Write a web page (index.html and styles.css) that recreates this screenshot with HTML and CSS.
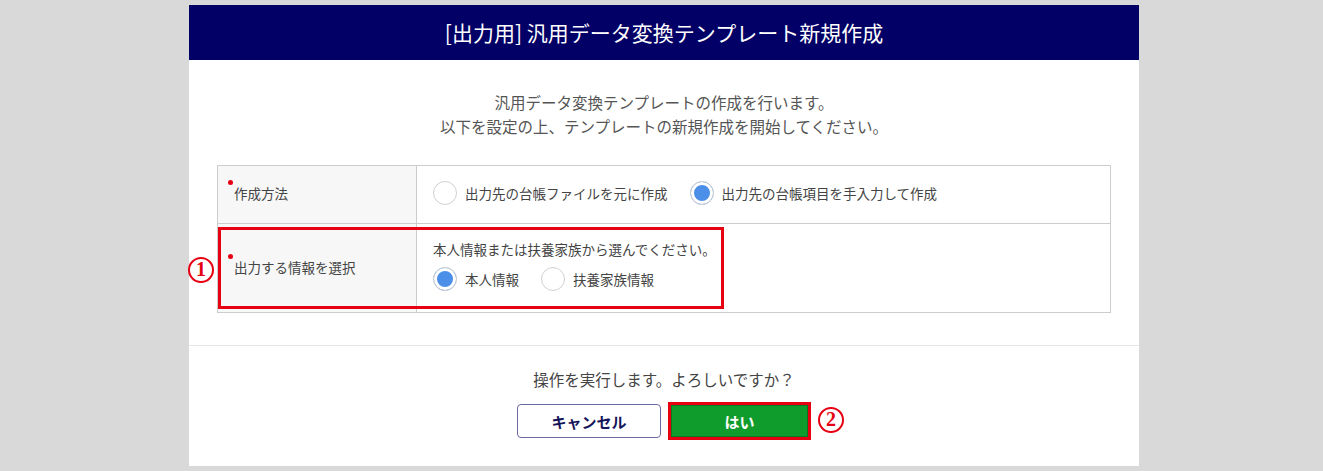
FILE: index.html
```html
<!DOCTYPE html>
<html lang="ja">
<head>
    <meta charset="UTF-8">
    <meta name="viewport" content="width=device-width, initial-scale=1.0">
    <title>汎用データ変換テンプレート新規作成</title>
    <link rel="stylesheet" href="styles.css">
</head>
<body>
    <div class="modal">
        <div class="modal-header">[出力用] 汎用データ変換テンプレート新規作成</div>

        <div class="modal-body">
            <p class="intro">汎用データ変換テンプレートの作成を行います。<br>以下を設定の上、テンプレートの新規作成を開始してください。</p>

            <div class="form-table">
                <div class="row">
                    <div class="label"><span class="req"></span>作成方法</div>
                    <div class="value">
                        <div class="radios">
                            <label class="radio"><span class="dot"></span>出力先の台帳ファイルを元に作成</label>
                            <label class="radio"><span class="dot checked"></span>出力先の台帳項目を手入力して作成</label>
                        </div>
                    </div>
                </div>
                <div class="row row-info">
                    <div class="label"><span class="req"></span>出力する情報を選択</div>
                    <div class="value">
                        <p class="hint">本人情報または扶養家族から選んでください。</p>
                        <div class="radios">
                            <label class="radio"><span class="dot checked"></span>本人情報</label>
                            <label class="radio"><span class="dot"></span>扶養家族情報</label>
                        </div>
                    </div>
                    <div class="mark-box"></div>
                    <span class="step step-1">1</span>
                </div>
            </div>
        </div>

        <div class="modal-footer">
            <p class="confirm">操作を実行します。よろしいですか？</p>
            <div class="buttons">
                <button class="btn btn-cancel">キャンセル</button>
                <div class="btn-wrap">
                    <button class="btn btn-ok">はい</button>
                    <span class="step step-2">2</span>
                </div>
            </div>
        </div>
    </div>
</body>
</html>
```

FILE: styles.css
```css
body {
    background-color: #d9d9d9;
    font-family: "Noto Sans CJK JP", "Noto Sans", sans-serif;
    color: #444444;
    margin: 0;
    padding-top: 5px;
}

.modal {
    width: 950px;
    margin-left: 189px;
    background-color: #ffffff;
}

.modal-header {
    background-color: #020066;
    color: #ffffff;
    height: 55px;
    line-height: 55px;
    text-align: center;
    font-size: 21px;
}

.modal-body {
    padding: 30px 28px 32px 28px;
    border-bottom: 1px solid #e6e6e6;
}

.intro {
    margin: 0 0 27px 0;
    text-align: center;
    font-size: 15.5px;
    line-height: 24px;
    color: #555555;
}

.form-table {
    border: 1px solid #cccccc;
    font-size: 13.5px;
}

.row {
    display: flex;
    position: relative;
}

.row + .row {
    border-top: 1px solid #cccccc;
}

.label {
    width: 199px;
    flex-shrink: 0;
    background-color: #f7f7f7;
    border-right: 1px solid #cccccc;
    display: flex;
    align-items: center;
    padding-left: 16px;
    padding-bottom: 3px;
    box-sizing: border-box;
    height: 57px;
}

.row-info .label {
    height: 88px;
}

.req {
    position: relative;
    width: 0;
    height: 0;
}

.req::before {
    content: "";
    position: absolute;
    left: -6px;
    top: -13px;
    width: 5px;
    height: 5px;
    border-radius: 50%;
    background-color: #e60012;
}

.value {
    padding: 0 16px 3px 16px;
    display: flex;
    flex-direction: column;
    justify-content: center;
}

.row-info .value {
    justify-content: flex-start;
    padding-top: 15px;
}

.hint {
    margin: 0 0 8px 0;
    line-height: 20px;
}

.radios {
    display: flex;
    gap: 22px;
}

.radio {
    display: flex;
    align-items: center;
    gap: 8px;
}

.dot {
    width: 24px;
    height: 24px;
    border: 1px solid #d0d0d0;
    border-radius: 50%;
    box-sizing: border-box;
    background-color: #ffffff;
}

.dot.checked {
    background-color: #4b8fe9;
    box-shadow: inset 0 0 0 3px #ffffff;
}

.mark-box {
    position: absolute;
    left: 0;
    top: 3px;
    width: 506px;
    height: 82px;
    border: 3px solid #e60012;
    box-sizing: border-box;
}

.step {
    position: absolute;
    width: 26px;
    height: 26px;
    border: 2.5px solid #e60012;
    border-radius: 50%;
    box-sizing: border-box;
    color: #e60012;
    font-family: "Liberation Serif", serif;
    font-weight: bold;
    font-size: 20px;
    line-height: 21px;
    text-align: center;
    background-color: #ffffff;
}

.step-1 {
    left: -30px;
    top: 33px;
}

.modal-footer {
    padding: 23px 0 26px 0;
    text-align: center;
}

.confirm {
    margin: 0 0 13px 0;
    font-size: 15.5px;
    line-height: 20px;
    color: #444444;
}

.buttons {
    display: flex;
    justify-content: center;
    align-items: center;
    gap: 7px;
}

.btn {
    font-family: "Noto Sans CJK JP", sans-serif;
    font-size: 15px;
    font-weight: bold;
    width: 144px;
    height: 34px;
    cursor: pointer;
}

.btn-cancel {
    background-color: #ffffff;
    color: #14145a;
    border: 1px solid #6a6aa0;
    border-radius: 4px;
}

.btn-wrap {
    position: relative;
}

.btn-ok {
    display: block;
    width: 143px;
    height: 38px;
    background-color: #109c2c;
    color: #ffffff;
    border: 3px solid #e60012;
    border-radius: 0;
    box-shadow: inset 0 0 0 1px #0a7a20;
}

.step-2 {
    left: 150px;
    top: 5px;
}
```
